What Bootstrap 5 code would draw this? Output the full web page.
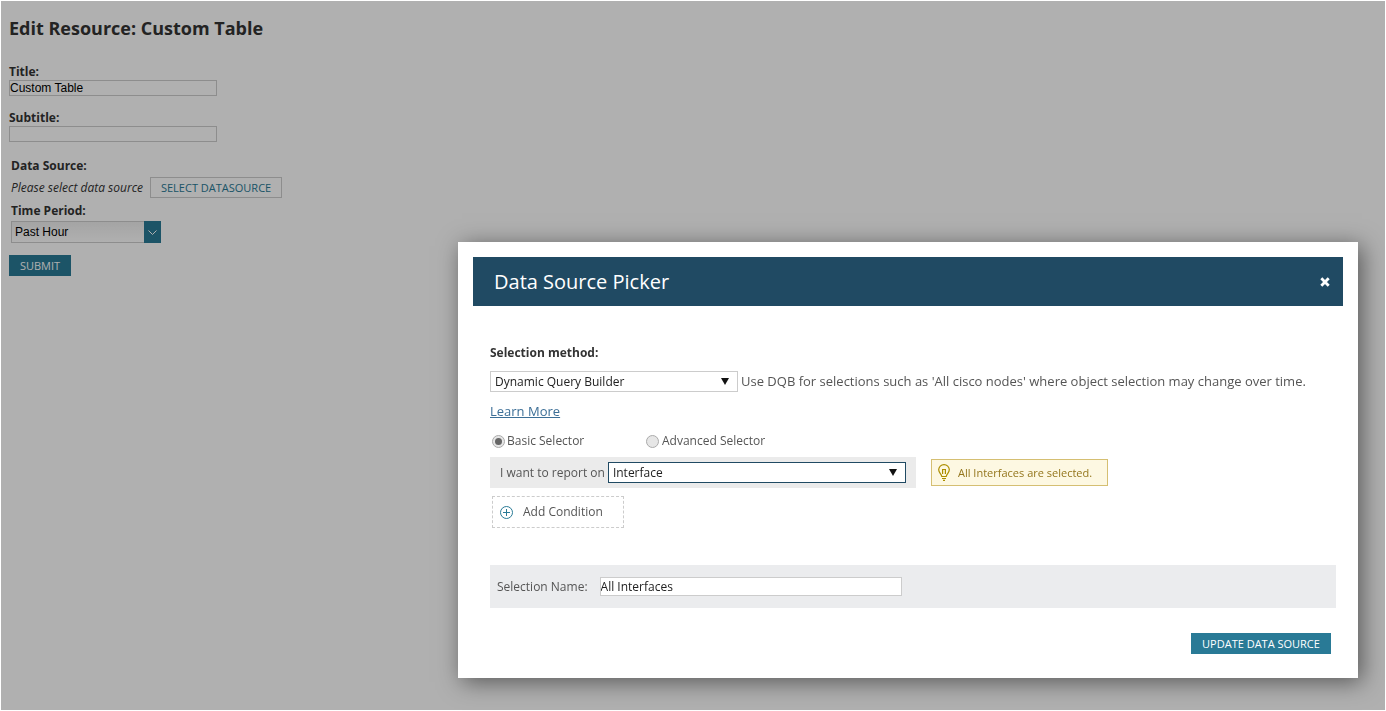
<!DOCTYPE html>
<html lang="en">
<head>
<meta charset="utf-8">
<title>Edit Resource: Custom Table</title>
<link rel="stylesheet" href="https://cdn.jsdelivr.net/npm/bootstrap@5.3.0/dist/css/bootstrap.min.css">
<style>
html,body{height:100%;margin:0;overflow:hidden}
body{background:#fff;font-family:"Open Sans",sans-serif;font-size:12px;color:#333;line-height:16px}
.page-wrap{padding:16px 9px 0}
.page-title{font-size:18px;font-weight:700;line-height:24px;margin:0 0 24px;color:#333}
.fld-label{display:block;font-weight:700;font-size:12px;line-height:16px;margin:0;color:#333}
.fld-input{display:block;width:208px;height:16px;border:1px solid #ccc;padding:0;font:12px/14px "Liberation Sans",sans-serif;color:#000;background:#fff;margin-bottom:14px;outline:0}
.ds-block{padding-left:2px;margin-top:16px}
.ds-row{margin-top:3px}
.ds-note{font-style:italic;font-size:12px;margin-right:7px}
.btn-ghost{border:1px solid #ccc;background:#fff;color:#297a96;font:11px/18px "Open Sans",sans-serif;padding:0;height:21px;border-radius:0;width:132px;white-space:nowrap}
.tp-label{margin-top:5px}
.tp-select{width:150px;height:22px;margin-top:2px;border:1px solid #ccc;display:flex;align-items:stretch;font:12px "Liberation Sans",sans-serif;color:#000;background:linear-gradient(#eee,#fff)}
.tp-text{flex:1;padding-left:3px;line-height:20px}
.tp-arrow{width:17px;margin:-1px -1px -1px 0;background:#297a96;display:flex;align-items:center;justify-content:center}
.btn-solid{display:block;background:#297a96;border:0;color:#fff;font:11px/21px "Open Sans",sans-serif;padding:0;width:62px;height:21px;border-radius:0;margin-top:12px}
.dim{position:fixed;inset:1px;background:rgba(0,0,0,.31)}
.picker{position:absolute;left:458px;top:242px;width:900px;height:436px;background:#fff;padding:15px;box-shadow:4px 4px 22px rgba(0,0,0,.5)}
.picker-head{height:49px;background:#204a63;color:#fff;padding:0 13px 0 21px;display:flex;align-items:center;justify-content:space-between}
.picker-title{font-size:20px;font-weight:400;margin:0;line-height:24px}
.picker-body{padding:39px 7px 0 17px;color:#555;font-size:12px}
.sm-label{font-weight:700;font-size:12px;color:#333;line-height:16px;margin-bottom:10px}
.sel-box{height:21px;border:1px solid #ccc;background:#fff;color:#222;font-size:12px;display:flex;align-items:center;justify-content:space-between;padding:0 8px 0 4px}
.sel-method{width:248px}
.hint-line{font-size:13px;color:#555;margin:0 0 2px 3px;white-space:nowrap}
.learn{display:inline-block;color:#3b6e96;font-size:13px;margin-top:10px;margin-bottom:1px;line-height:18px}
.radio-row{display:flex;margin-top:12px;padding-left:2px;font-size:12px;line-height:16px}
.rdo{width:13px;height:13px;border-radius:50%;border:1px solid #aaa;background:#e6e6e6;display:inline-flex;align-items:center;justify-content:center;margin-right:2px}
.rdo-dot{width:7px;height:7px;border-radius:50%;background:#666}
.rdo-item{display:flex;align-items:center;width:155px}
.rdo-item + .rdo-item .rdo{margin:0 3px 0 -1px}
.report-row{display:flex;align-items:center;margin-top:8px}
.report-bar{width:426px;height:31px;background:#ebebeb;display:flex;align-items:center;padding-left:10px;font-size:12px}
.sel-report{width:298px;margin-left:3px;border-color:#204a63;padding-left:4px}
.tip{margin-left:15px;width:177px;height:27px;background:#fdf8e2;border:1px solid #d5bf72;color:#94761d;font-size:11px;display:flex;align-items:center;padding-left:6px;gap:8px}
.add-cond{width:132px;height:32px;margin:8px 0 0 2px;border:1px dashed #ccc;display:flex;align-items:center;padding-left:7px;gap:10px;font-size:12px}
.name-bar{margin-top:37px;height:43px;background:#ebecee;display:flex;align-items:center;padding-left:7px;font-size:12px;gap:12px}
.name-input{width:302px;height:19px;border:1px solid #ccc;padding:0;font:12px "Open Sans",sans-serif;color:#222;outline:0}
.foot-row{display:flex;justify-content:flex-end;margin-top:25px;padding-right:5px}
.btn-update{background:#297a96;border:0;color:#fff;font:11px/21px "Open Sans",sans-serif;height:21px;width:140px;padding:0;border-radius:0;white-space:nowrap}
</style>
</head>
<body>
<div class="page-wrap">
  <h1 class="page-title">Edit Resource: Custom Table</h1>
  <label class="fld-label" for="t1">Title:</label>
  <input id="t1" class="fld-input" value="Custom Table">
  <label class="fld-label" for="t2">Subtitle:</label>
  <input id="t2" class="fld-input">
  <div class="ds-block">
    <div class="fld-label">Data Source:</div>
    <div class="d-flex align-items-center ds-row">
      <span class="ds-note">Please select data source</span>
      <button class="btn-ghost">SELECT DATASOURCE</button>
    </div>
    <div class="fld-label tp-label">Time Period:</div>
    <div class="tp-select">
      <span class="tp-text">Past Hour</span>
      <span class="tp-arrow"><svg width="9" height="5" viewBox="0 0 9 5"><path d="M.5.5l4 4 4-4" fill="none" stroke="#fff"/></svg></span>
    </div>
  </div>
  <button class="btn-solid">SUBMIT</button>
</div>
<div class="dim"></div>
<div class="picker">
  <div class="picker-head">
    <h2 class="picker-title">Data Source Picker</h2>
    <svg width="10" height="10" viewBox="0 0 10 10"><path d="M1.300 1.300l7.400 7.400M8.700 1.300L1.300 8.700" stroke="#fff" stroke-width="2.800"/></svg>
  </div>
  <div class="picker-body">
    <div class="sm-label">Selection method:</div>
    <div class="d-flex align-items-center">
      <div class="sel-box sel-method"><span>Dynamic Query Builder</span><svg width="8" height="7" viewBox="0 0 8 7"><path d="M0 0h8L4 7z" fill="#111"/></svg></div>
      <span class="hint-line">Use DQB for selections such as 'All cisco nodes' where object selection may change over time.</span>
    </div>
    <a class="learn" href="#">Learn More</a>
    <div class="radio-row">
      <span class="rdo-item"><span class="rdo"><span class="rdo-dot"></span></span>Basic Selector</span>
      <span class="rdo-item"><span class="rdo"></span>Advanced Selector</span>
    </div>
    <div class="report-row">
      <div class="report-bar">I want to report on
        <div class="sel-box sel-report"><span>Interface</span><svg width="8" height="7" viewBox="0 0 8 7"><path d="M0 0h8L4 7z" fill="#111"/></svg></div>
      </div>
      <div class="tip">
        <svg width="12" height="17" viewBox="0 0 12 17" fill="none" stroke="#ac8e00" stroke-width="1.200"><path d="M3.800 12.500C3.500 10 .7 8.800 .7 5.800a5.300 5.200 0 0 1 10.600 0c0 3-2.800 4.200-3.100 6.700z"/><path d="M4.600 10V5.500h2.800V10M4 14.500h4M5 16.300h2"/></svg>
        <span>All Interfaces are selected.</span>
      </div>
    </div>
    <div class="add-cond">
      <svg width="13" height="13" viewBox="0 0 13 13" fill="none" stroke="#297a96"><circle cx="6.500" cy="6.500" r="6"/><path d="M6.500 3v7M3 6.500h7"/></svg>
      <span>Add Condition</span>
    </div>
    <div class="name-bar">
      <span>Selection Name:</span>
      <input class="name-input" value="All Interfaces">
    </div>
    <div class="foot-row"><button class="btn-update">UPDATE DATA SOURCE</button></div>
  </div>
</div>
<script src="https://cdn.jsdelivr.net/npm/bootstrap@5.3.0/dist/js/bootstrap.bundle.min.js"></script>
</body>
</html>
